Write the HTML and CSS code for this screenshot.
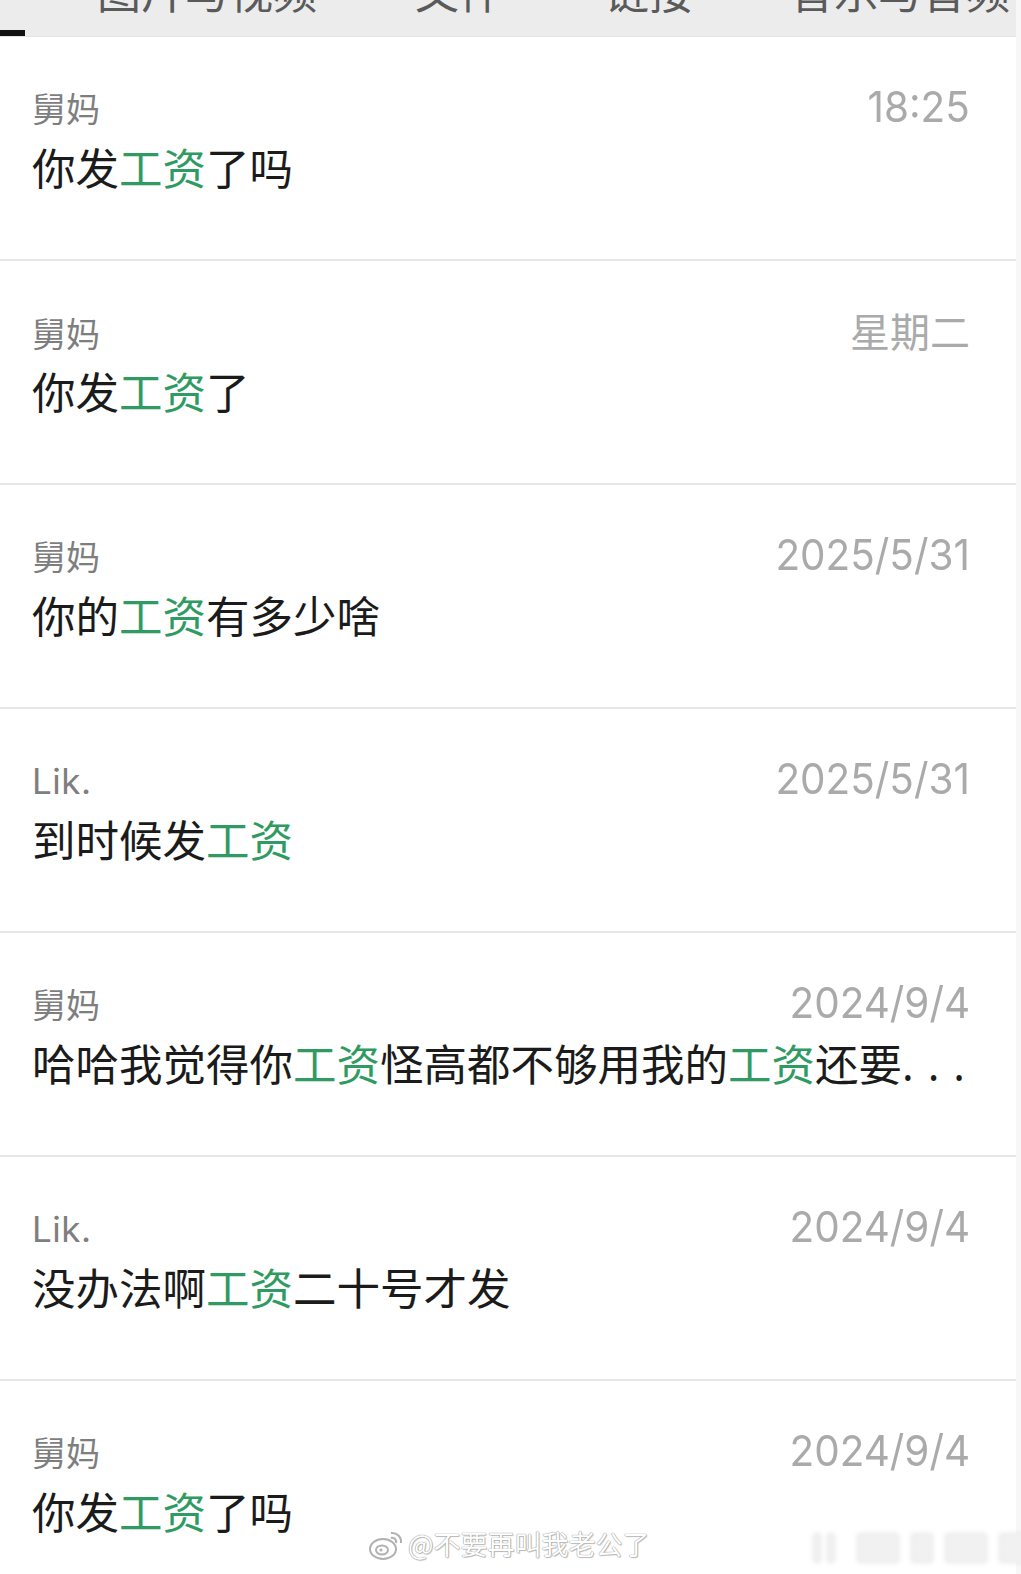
FILE: index.html
```html
<!DOCTYPE html>
<html lang="zh-CN">
<head>
<meta charset="utf-8">
<link rel="stylesheet" href="styles.css">
</head>
<body>
<div class="page">
  <div class="tabs">
    <div class="tab-row">
      <span class="tab t1">图片与视频</span>
      <span class="tab t2">文件</span>
      <span class="tab t3">链接</span>
      <span class="tab t4">音乐与音频</span>
    </div>
    <div class="indicator"></div>
  </div>
  <ul class="list">
    <li class="item">
      <div class="meta"><span class="name">舅妈</span><span class="time">18:25</span></div>
      <div class="msg">你发<em>工资</em>了吗</div>
    </li>
    <li class="item">
      <div class="meta"><span class="name">舅妈</span><span class="time cjk">星期二</span></div>
      <div class="msg">你发<em>工资</em>了</div>
    </li>
    <li class="item">
      <div class="meta"><span class="name">舅妈</span><span class="time">2025/5/31</span></div>
      <div class="msg">你的<em>工资</em>有多少啥</div>
    </li>
    <li class="item">
      <div class="meta"><span class="name latin">Lik.</span><span class="time">2025/5/31</span></div>
      <div class="msg">到时候发<em>工资</em></div>
    </li>
    <li class="item">
      <div class="meta"><span class="name">舅妈</span><span class="time">2024/9/4</span></div>
      <div class="msg">哈哈我觉得你<em>工资</em>怪高都不够用我的<em>工资</em>还要<span class="dots">...</span></div>
    </li>
    <li class="item">
      <div class="meta"><span class="name latin">Lik.</span><span class="time">2024/9/4</span></div>
      <div class="msg">没办法啊<em>工资</em>二十号才发</div>
    </li>
    <li class="item last">
      <div class="meta"><span class="name">舅妈</span><span class="time">2024/9/4</span></div>
      <div class="msg">你发<em>工资</em>了吗</div>
    </li>
  </ul>
  <div class="watermark">
    <svg class="wb" width="38" height="34" viewBox="0 0 38 34">
      <ellipse cx="15" cy="22" rx="13" ry="10" fill="#ffffff" stroke="#b0b0b0" stroke-width="2"/>
      <ellipse cx="14" cy="23" rx="6" ry="4.5" fill="none" stroke="#b0b0b0" stroke-width="2"/>
      <circle cx="13" cy="23" r="1.6" fill="#b0b0b0"/>
      <path d="M23 6 a9 9 0 0 1 10 10" fill="none" stroke="#b0b0b0" stroke-width="2"/>
      <path d="M23 11 a4 4 0 0 1 5 5" fill="none" stroke="#b0b0b0" stroke-width="2"/>
    </svg>
    <span class="wm-text">@不要再叫我老公了</span>
  </div>
  <div class="blur-bars">
    <span class="bar b1"></span><span class="bar b2"></span><span class="bar b3"></span><span class="bar b4"></span><span class="bar b5"></span><span class="bar b6"></span>
  </div>
</div>
</body>
</html>
```

FILE: styles.css
```css
* { box-sizing: border-box; }
html, body { margin: 0; padding: 0; background: #ffffff; }
body {
  font-family: "Noto Sans CJK SC", "Noto Sans", sans-serif;
  width: 1021px;
  height: 1574px;
  overflow: hidden;
}
.page { position: relative; width: 1021px; height: 1574px; border-right: 5px solid #f7f7f7; }

.tabs {
  position: relative;
  height: 37px;
  background: #ececec;
  overflow: hidden;
  border-bottom: 1px solid #e4e4e4;
}
.tab-row {
  display: flex;
  margin-top: -32px;
  font-size: 44px;
  line-height: 44px;
  color: #5a5a5a;
}
.tab { white-space: nowrap; }
.t1 { margin-left: 97px; }
.t2 { margin-left: 98px; }
.t3 { margin-left: 102px; }
.t4 { margin-left: 97px; }
.indicator {
  position: absolute;
  left: 0;
  bottom: 0;
  width: 25px;
  height: 6px;
  background: #111111;
}

.list { list-style: none; margin: 0; padding: 0; }
.item {
  height: 224px;
  padding: 46px 46px 0 32px;
  border-bottom: 2px solid #e6e6e6;
}
.item.last { border-bottom: none; }
.meta {
  display: flex;
  justify-content: space-between;
  align-items: baseline;
  height: 46px;
}
.name {
  font-size: 34px;
  line-height: 46px;
  color: #7e7e7e;
}
.name.latin { font-family: "Inter", "Noto Sans", sans-serif; font-size: 35px; letter-spacing: 0.5px; }
.time {
  display: inline-block;
  font-family: "Inter", "Noto Sans", sans-serif;
  font-size: 43px;
  line-height: 46px;
  color: #aaaaaa;
  transform: scaleX(0.94);
  transform-origin: right center;
}
.time.cjk { font-family: "Noto Sans CJK SC", sans-serif; font-size: 40px; transform: none; }
.msg {
  margin-top: 10px;
  font-size: 43.5px;
  line-height: 56px;
  color: #1b1b1b;
  white-space: nowrap;
}
.msg em { font-style: normal; color: #2f9b62; }
.dots { letter-spacing: 14px; font-family: "Noto Sans", sans-serif; }

.watermark {
  position: absolute;
  left: 368px;
  top: 1527px;
  display: flex;
  align-items: center;
  gap: 2px;
}
.wm-text {
  font-size: 27px;
  line-height: 34px;
  color: #ffffff;
  text-shadow: 0 0 1px #8f8f8f, 0 0 1px #8f8f8f, 1px 1px 1px #c4c4c4;
}
.blur-bars {
  position: absolute;
  left: 813px;
  top: 1533px;
  display: flex;
  gap: 12px;
  align-items: flex-end;
}
.bar {
  display: block;
  height: 30px;
  background: #f1f1f1;
  border: 1px solid #dedede;
  border-radius: 3px;
  filter: blur(2px);
}
.b1 { width: 8px; }
.b2 { width: 8px; margin-left: -6px; }
.b3 { width: 42px; margin-left: 10px; }
.b4 { width: 22px; }
.b5 { width: 42px; }
.b6 { width: 36px; }
```
